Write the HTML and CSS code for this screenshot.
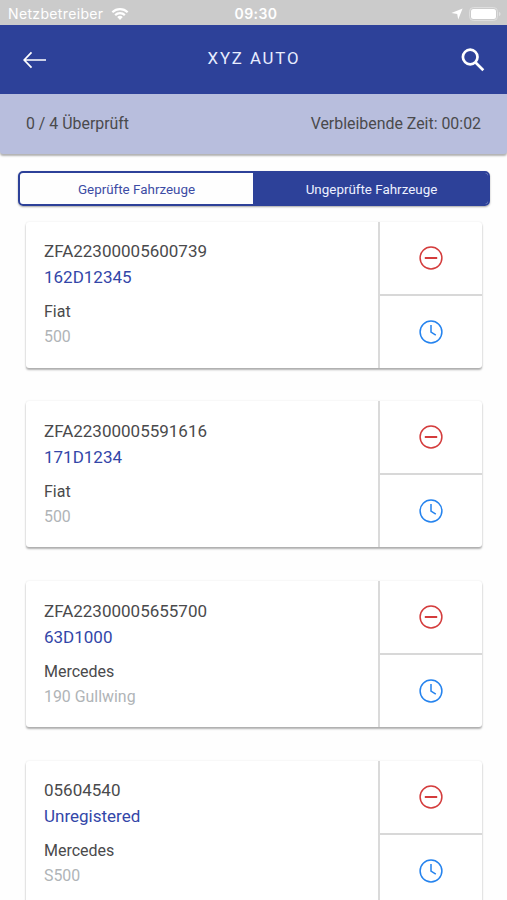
FILE: index.html
```
<!DOCTYPE html>
<html lang="de">
<head>
<meta charset="utf-8">
<title>XYZ AUTO</title>
<link rel="stylesheet" href="styles.css">
</head>
<body>
<svg class="defs" aria-hidden="true">
  <symbol id="minus" viewBox="0 0 24 24"><circle cx="12" cy="12" r="10.9"/><path d="M5.800 12h12.400" stroke-width="2"/></symbol>
  <symbol id="clock" viewBox="0 0 24 24"><circle cx="12" cy="12" r="10.9"/><path d="M12 5v7.200l4.800 3"/></symbol>
</svg>
<div class="statusbar">
  <div class="carrier"><span>Netzbetreiber</span>
    <svg class="wifi" viewBox="0 0 18 13"><path d="M.6 4.5a12 12 0 0 1 16.8 0l-1.5 1.6a9.8 9.8 0 0 0-13.8 0zM3.4 7.3a8 8 0 0 1 11.2 0l-1.5 1.6a5.8 5.8 0 0 0-8.2 0zM6.2 10.1a4 4 0 0 1 5.6 0L9 12.9z"/></svg>
  </div>
  <div class="clocktime">09:30</div>
  <div class="indicators">
    <svg class="location" viewBox="0 0 12 12"><path d="M11.6.4 7.2 11.6 6.2 6 .4 4.9z"/></svg>
    <svg class="battery" viewBox="0 0 32 14"><rect x=".5" y=".5" width="28" height="13" rx="4" fill="none" stroke="#dedede"/><rect x="2" y="2" width="25" height="10" rx="2.5"/><path d="M30 5c2 .6 2 3.400 0 4z" fill="#e2e2e2"/></svg>
  </div>
</div>
<header class="appbar">
  <svg class="back" viewBox="0 0 24 18"><path d="M23 9H1.200M8.500 1.300 1.200 9l7.300 7.700"/></svg>
  <h1>XYZ AUTO</h1>
  <svg class="search" viewBox="0 0 24 24"><circle cx="9.200" cy="9" r="7.300"/><path d="m14.300 14.200 8 8"/></svg>
</header>
<div class="summary"><span>0 / 4 Überprüft</span><span>Verbleibende Zeit: 00:02</span></div>
<nav class="tabs"><div class="tab">Geprüfte Fahrzeuge</div><div class="tab active">Ungeprüfte Fahrzeuge</div></nav>
<main class="list">
  <article class="card">
    <div class="info"><p class="vin">ZFA22300005600739</p><p class="plate">162D12345</p><p class="make">Fiat</p><p class="model">500</p></div>
    <div class="actions"><div class="action remove"><svg><use href="#minus"/></svg></div><div class="action later"><svg><use href="#clock"/></svg></div></div>
  </article>
  <article class="card">
    <div class="info"><p class="vin">ZFA22300005591616</p><p class="plate">171D1234</p><p class="make">Fiat</p><p class="model">500</p></div>
    <div class="actions"><div class="action remove"><svg><use href="#minus"/></svg></div><div class="action later"><svg><use href="#clock"/></svg></div></div>
  </article>
  <article class="card">
    <div class="info"><p class="vin">ZFA22300005655700</p><p class="plate">63D1000</p><p class="make">Mercedes</p><p class="model">190 Gullwing</p></div>
    <div class="actions"><div class="action remove"><svg><use href="#minus"/></svg></div><div class="action later"><svg><use href="#clock"/></svg></div></div>
  </article>
  <article class="card">
    <div class="info"><p class="vin">05604540</p><p class="plate">Unregistered</p><p class="make">Mercedes</p><p class="model">S500</p></div>
    <div class="actions"><div class="action remove"><svg><use href="#minus"/></svg></div><div class="action later"><svg><use href="#clock"/></svg></div></div>
  </article>
</main>
</body>
</html>
```
FILE: styles.css
```
* { box-sizing: border-box; }
body {
  margin: 0;
  height: 900px;
  overflow: hidden;
  display: flex;
  flex-direction: column;
  background: #fefefe;
  color: #4a4a4c;
  font: 16px/20px Roboto, sans-serif;
}
.defs { position: absolute; width: 0; height: 0; }
.statusbar {
  flex: 0 0 25px;
  display: grid;
  grid-template-columns: 1fr auto 1fr;
  align-items: center;
  padding: 2px 6px 0 8px;
  background: #cbcbcb;
  color: #fff;
  font: 14px/20px Inter, sans-serif;
}
.statusbar svg { fill: #fff; }
.carrier { display: flex; align-items: center; gap: 8px; letter-spacing: .35px; }
.wifi { width: 18px; height: 13px; }
.clocktime { font-weight: 600; letter-spacing: .4px; padding-left: 3px; }
.indicators { display: flex; justify-content: flex-end; align-items: center; gap: 6px; }
.location { width: 12px; height: 12px; }
.battery { width: 32px; height: 14px; }
.appbar {
  flex: 0 0 69px;
  display: grid;
  grid-template-columns: 1fr auto 1fr;
  align-items: center;
  padding: 0 22px 0 23px;
  background: #2d4199;
}
.appbar svg { fill: none; stroke: #fff; }
.back { width: 24px; height: 18px; stroke-width: 1.7; }
.search { width: 24px; height: 24px; stroke-width: 2.7; justify-self: end; }
h1 {
  margin: 0;
  padding-bottom: 3px;
  color: #e7edff;
  font-size: 16.800px;
  font-weight: 400;
  letter-spacing: 1.900px;
}
.summary {
  flex: 0 0 60px;
  display: flex;
  justify-content: space-between;
  align-items: center;
  padding: 0 26px;
  background: #b8bedd;
  border-radius: 0 0 3px 3px;
  font-size: 15.900px;
  box-shadow: 0 2px 2px rgba(0,0,0,.3);
}
.tabs {
  flex: 0 0 35px;
  display: flex;
  margin: 17px 17px 0 18px;
  border: 2px solid #2d4199;
  border-radius: 5px;
  overflow: hidden;
  box-shadow: 0 1px 2px rgba(0,0,0,.35);
}
.tab {
  flex: 0 0 233px;
  display: flex;
  align-items: center;
  justify-content: center;
  padding-top: 2px;
  color: #3c4ca4;
  font-size: 13.400px;
}
.active { flex: 1; padding-left: 2px; background: #2d4199; color: #edf1ff; }
.list {
  display: flex;
  flex-direction: column;
  gap: 33.700px;
  padding: 15.500px 25px 0 26px;
}
.card {
  flex: 0 0 146px;
  display: grid;
  grid-template-columns: 1fr 102px;
  grid-template-rows: 146px;
  border-radius: 3px;
  background: #fff;
  box-shadow: 0 2px 2px rgba(0,0,0,.3), 0 0 2px rgba(0,0,0,.1);
}
.info { padding: 18.700px 18px 0; border-right: 2px solid #dadada; }
p { margin: 0; line-height: 22px; }
.vin, .plate { font-size: 17px; }
.plate { margin-top: 4px; color: #3346a8; }
.make { margin-top: 13px; line-height: 21px; }
.model { margin-top: 4px; line-height: 22px; color: #b0b4b7; font-size: 15.900px; }
.actions { display: grid; grid-template-rows: 74px 1fr; }
.action { display: flex; align-items: center; justify-content: center; }
.action svg { width: 24px; height: 24px; fill: none; stroke: currentColor; stroke-width: 1.500; }
.remove { border-bottom: 2px solid #d8d8d8; color: #d43c3c; }
.later { color: #2583ee; }
```
